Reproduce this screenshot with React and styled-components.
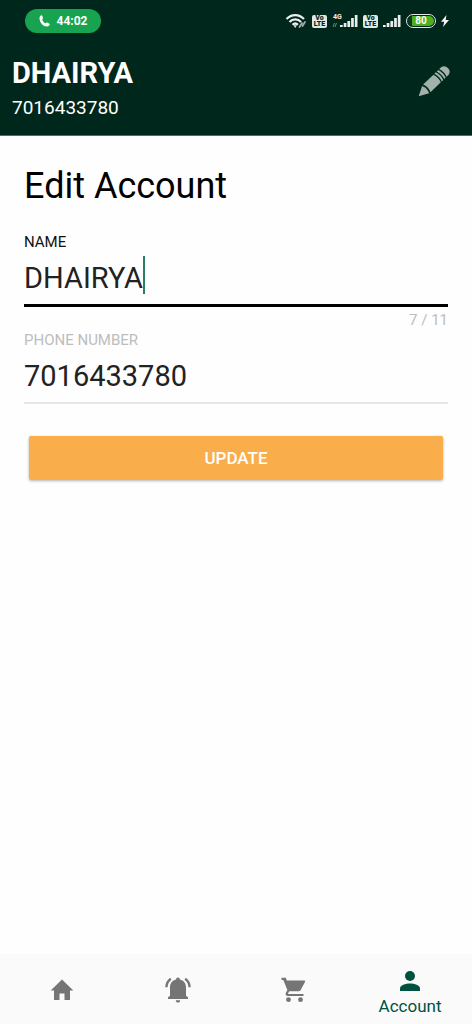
import React, { useState } from "react";
import styled, { createGlobalStyle } from "styled-components";

const GlobalStyle = createGlobalStyle`
  *, *::before, *::after { box-sizing: border-box; }
  body { margin: 0; background: #fefefe; font-family: Roboto, sans-serif; }
`;

const Screen = styled.div`
  display: flex;
  flex-direction: column;
  min-height: 100vh;
`;

const Header = styled.header`
  background: #00271c;
  color: #fff;
  border-bottom: 1px solid #4f6b62;
`;

const StatusBar = styled.div`
  display: flex;
  align-items: center;
  justify-content: space-between;
  height: 42px;
  padding: 0 23px 0 25px;
`;

const CallPill = styled.div`
  display: flex;
  align-items: center;
  justify-content: center;
  gap: 7px;
  width: 76px;
  height: 24px;
  border-radius: 12px;
  background: #17a34f;
  font-size: 12px;
  font-weight: 700;
`;

const StatusIcons = styled.div`
  display: flex;
  align-items: center;
  gap: 5px;
`;

const Icon = styled.svg`
  display: block;
  flex: none;
`;

const VolteBadge = styled.div`
  display: flex;
  flex-direction: column;
  align-items: center;
  justify-content: center;
  width: 15px;
  height: 13px;
  border-radius: 2px;
  background: #dfe8e4;
  color: #00271c;
  font-size: 7px;
  line-height: 6px;
  font-weight: 900;
`;

const Battery = styled.div`
  display: flex;
  width: 30px;
  height: 14px;
  padding: 1px;
  border: 1px solid #dfe8e4;
  border-radius: 7px;
`;

const BatteryLevel = styled.div`
  flex: 1;
  border-radius: 5px;
  background: linear-gradient(90deg, #0a3a1c 0 16%, #4caf1e 16%);
  font-size: 10px;
  line-height: 10px;
  font-weight: 700;
  text-align: center;
`;

const Profile = styled.div`
  display: flex;
  align-items: center;
  justify-content: space-between;
  padding: 14px 22px 15px 12px;
`;

const ProfileName = styled.div`
  font-size: 29px;
  line-height: 34px;
  font-weight: 700;
`;

const ProfilePhone = styled.div`
  margin-top: 6px;
  font-size: 19px;
  line-height: 24px;
`;

const IconButton = styled.button`
  margin: 0 0 12px;
  padding: 0;
  border: 0;
  background: none;
  cursor: pointer;
`;

const Form = styled.form`
  flex: 1;
  display: flex;
  flex-direction: column;
  padding: 28px 24px;
`;

const Title = styled.h1`
  margin: 0 0 24px;
  color: #000;
  font-size: 36px;
  line-height: 44px;
  font-weight: 400;
`;

const Label = styled.label`
  color: ${(p) => (p.$muted ? "#bdbdbd" : "#111")};
  font-size: 15px;
  line-height: 20px;
`;

const InputLine = styled.div`
  display: flex;
  align-items: center;
  height: ${(p) => (p.$active ? "55px" : "54px")};
  border-bottom: ${(p) => (p.$active ? "3px solid #000" : "2px solid #e6e6e6")};
`;

const Input = styled.input`
  field-sizing: content;
  max-width: 100%;
  padding: 0;
  border: 0;
  outline: 0;
  background: none;
  color: #222;
  caret-color: transparent;
  font: 400 29px/38px Roboto, sans-serif;
`;

const Caret = styled.span`
  width: 2px;
  height: 38px;
  margin-bottom: 6px;
  background: #2e7d68;
`;

const Counter = styled.div`
  margin-top: 3px;
  color: #bdbdbd;
  font-size: 15px;
  line-height: 20px;
  text-align: right;
`;

const UpdateButton = styled.button`
  margin: 32px 5px 0;
  height: 44px;
  border: 0;
  border-radius: 2px;
  background: #f9ae4b;
  box-shadow: 0 1px 3px rgba(0, 0, 0, 0.3);
  color: #fff;
  font: 500 17px/20px Roboto, sans-serif;
  cursor: pointer;
`;

const TabBar = styled.nav`
  display: grid;
  grid-template-columns: repeat(4, 1fr);
  height: 70px;
  padding: 0 4px;
  background: #fafafa;
`;

const Tab = styled.a`
  display: flex;
  flex-direction: column;
  align-items: center;
  justify-content: center;
  gap: 5px;
  padding-top: ${(p) => (p.$active ? "8px" : "2px")};
  color: ${(p) => (p.$active ? "#00513f" : "#757575")};
  font-size: 17px;
  line-height: 20px;
  text-decoration: none;
`;

const PhoneIcon = () => (
  <Icon width="11" height="12" viewBox="0 0 11 12" aria-hidden="true">
    <path
      fill="#fff"
      d="M1 1.2C1.8.1 2.8 0 3.2.8L4 2.9c.2.6-.8 1.3-.7 1.9.3 1.4 1.6 2.9 3 3.5.6.2 1.1-.9 1.8-.7l2 .8c.9.4.7 1.6-.1 2.3C8.200 12.200 5 11.300 3 9.200 1 7.200-.3 3.300 1 1.200Z"
    />
  </Icon>
);

const WifiIcon = () => (
  <Icon width="22" height="16" viewBox="0 0 22 16" aria-hidden="true">
    <g fill="none" stroke="#e8efec" strokeWidth="2.200">
      <path d="M1.500 6c5-5.200 12.500-5.200 17.500 0" />
      <path d="M4.500 9c3.200-3.400 8.300-3.400 11.500 0" />
      <path d="M7.500 11.800c1.700-1.600 3.800-1.600 5.500 0" />
    </g>
    <path d="M8.500 12.300h3.400L10.200 15Z" fill="#e8efec" />
    <path d="m14.500 14 2.500-4M17.500 13l2.500-4" stroke="#9cb0a8" strokeWidth="1.800" strokeLinecap="round" />
  </Icon>
);

const BARS = [2, 4, 6, 9, 12];

const SignalBars = ({ network }) => (
  <Icon width={network ? 26 : 18} height="16" viewBox={network ? "0 0 26 16" : "8 0 18 16"} aria-hidden="true">
    {network && (
      <>
        <text x="1" y="6" fill="#e8efec" fontSize="7" fontWeight="700" fontFamily="Roboto, sans-serif">
          {network}
        </text>
        <path d="m1 14 1.500-4M3 14l1.500-4" stroke="#6f877e" />
      </>
    )}
    {BARS.map((h, i) => (
      <rect key={h} x={8 + i * 3.7} y={14 - h} width="2.700" height={h} fill="#e8efec" />
    ))}
  </Icon>
);

const BoltIcon = () => (
  <Icon width="8" height="12" viewBox="0 0 8 12" aria-hidden="true">
    <path d="M5.500 0 0 6.800h3.200L2 12l6-7H4.700Z" fill="#f4f7f6" />
  </Icon>
);

const PencilIcon = () => (
  <Icon width="32" height="32" viewBox="0 0 96 96" aria-hidden="true">
    <g transform="translate(2 91) rotate(-44)" fill="#a3b1ab">
      <path d="M0 0 29-15Q36 0 29 15Z" />
      <path d="M34-16H77Q83 0 77 16H34Q41 0 34-16Z" />
      <path d="M81-16h6q6 16 0 32h-6q6-16 0-32ZM91-16h6q6 16 0 32h-6q6-16 0-32Z" />
      <path d="M101-16h8q13 2 13 16t-13 16h-8q6-16 0-32Z" />
    </g>
  </Icon>
);

const HomeIcon = () => (
  <Icon width="24" height="22" viewBox="0 0 24 22" aria-hidden="true">
    <path fill="currentColor" d="M12 .5.700 11.500H4V21h5.500v-6.500h5V21H20v-9.500h3.300Z" />
  </Icon>
);

const BellIcon = () => (
  <Icon width="26" height="26" viewBox="0 0 26 26" aria-hidden="true">
    <path
      fill="currentColor"
      d="M13 .5c-1.200 0-1.900.8-1.900 1.900C7.300 3.200 5 6.400 5 10.200v8.600L3 20.300V22h20v-1.700l-2-1.500v-8.600c0-3.800-2.300-7-6.100-7.800C14.900 1.300 14.200.5 13 .5ZM10.800 23.200h4.400c0 1.400-1 2.300-2.200 2.300S10.800 24.600 10.800 23.200Z"
    />
    <g fill="none" stroke="currentColor" strokeWidth="2.400">
      <path d="M5.800 1.800Q1.500 5 1.400 10.300" />
      <path d="M20.200 1.800q4.300 3.200 4.400 8.500" />
    </g>
  </Icon>
);

const CartIcon = () => (
  <Icon width="26" height="26" viewBox="0 0 26 26" aria-hidden="true">
    <g fill="currentColor">
      <path d="M.500.800h4.200l1.200 2.700h17.400c.7 0 1.100.7.800 1.300L19.700 13c-.4.800-1 1.200-2 1.200H8.200l-1.200 2.200c-.1.300 0 .5.400.5h15.100v2.200H6.900c-1.900 0-2.900-1.800-2-3.400l1.500-2.800L2.300 3H.500Z" />
      <circle cx="7.500" cy="22.700" r="2.400" />
      <circle cx="19.500" cy="22.700" r="2.400" />
    </g>
  </Icon>
);

const PersonIcon = () => (
  <Icon width="20" height="20" viewBox="0 0 20 20" aria-hidden="true">
    <circle cx="10" cy="5" r="5" fill="currentColor" />
    <path fill="currentColor" d="M10 12.500c-4.500 0-10 1.500-10 5V20h20v-2.500C20 14 14.500 12.500 10 12.500Z" />
  </Icon>
);

const MAX_NAME = 11;

export default function App() {
  const [name, setName] = useState("DHAIRYA");
  const [phone, setPhone] = useState("7016433780");

  return (
    <Screen>
      <GlobalStyle />
      <Header>
        <StatusBar>
          <CallPill>
            <PhoneIcon />
            44:02
          </CallPill>
          <StatusIcons>
            <WifiIcon />
            <VolteBadge>
              <span>Vo</span>
              <span>LTE</span>
            </VolteBadge>
            <SignalBars network="4G" />
            <VolteBadge>
              <span>Vo</span>
              <span>LTE</span>
            </VolteBadge>
            <SignalBars />
            <Battery>
              <BatteryLevel>80</BatteryLevel>
            </Battery>
            <BoltIcon />
          </StatusIcons>
        </StatusBar>
        <Profile>
          <div>
            <ProfileName>DHAIRYA</ProfileName>
            <ProfilePhone>7016433780</ProfilePhone>
          </div>
          <IconButton type="button" aria-label="Edit profile">
            <PencilIcon />
          </IconButton>
        </Profile>
      </Header>
      <Form onSubmit={(e) => e.preventDefault()}>
        <Title>Edit Account</Title>
        <Label htmlFor="name">NAME</Label>
        <InputLine $active>
          <Input id="name" value={name} maxLength={MAX_NAME} onChange={(e) => setName(e.target.value)} />
          <Caret />
        </InputLine>
        <Counter>
          {name.length} / {MAX_NAME}
        </Counter>
        <Label htmlFor="phone" $muted>
          PHONE NUMBER
        </Label>
        <InputLine>
          <Input id="phone" type="tel" value={phone} onChange={(e) => setPhone(e.target.value)} />
        </InputLine>
        <UpdateButton type="submit">UPDATE</UpdateButton>
      </Form>
      <TabBar>
        <Tab href="#home" aria-label="Home">
          <HomeIcon />
        </Tab>
        <Tab href="#notifications" aria-label="Notifications">
          <BellIcon />
        </Tab>
        <Tab href="#cart" aria-label="Cart">
          <CartIcon />
        </Tab>
        <Tab href="#account" $active aria-current="page">
          <PersonIcon />
          Account
        </Tab>
      </TabBar>
    </Screen>
  );
}
